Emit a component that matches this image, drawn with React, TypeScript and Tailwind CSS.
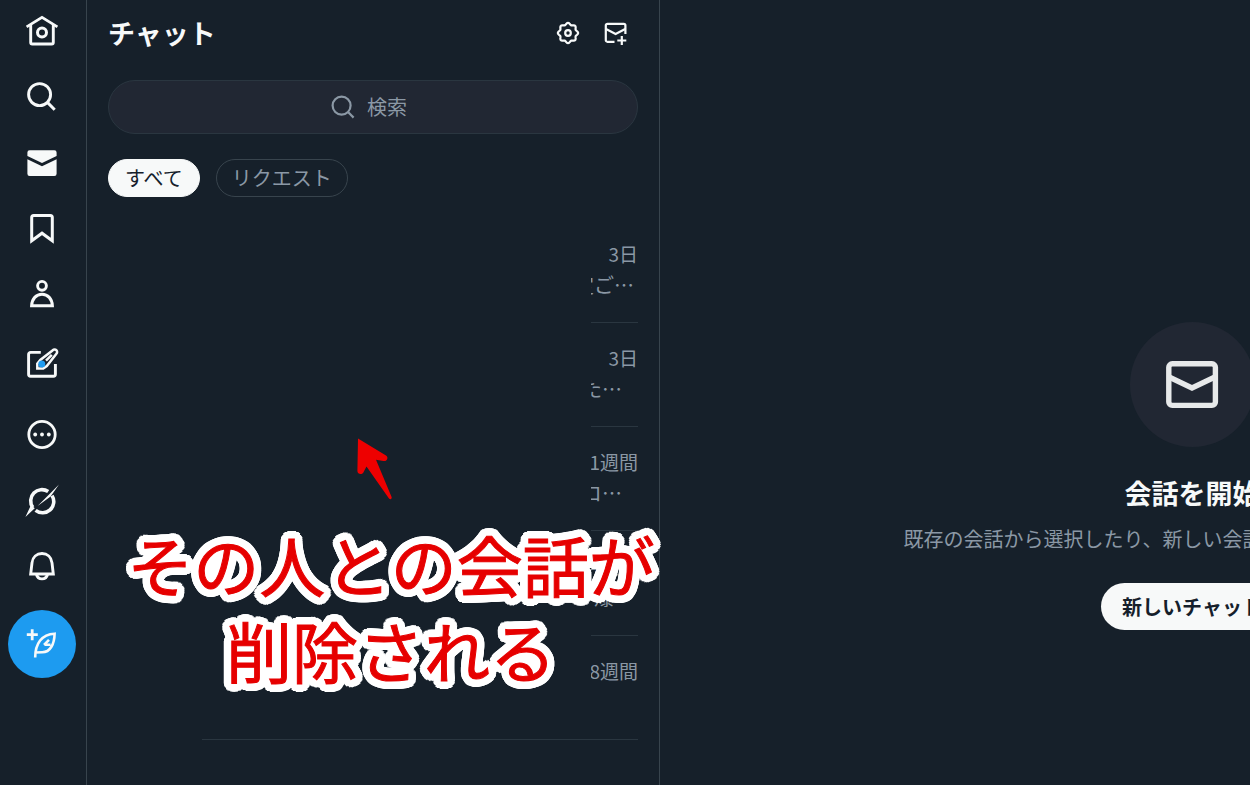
import type { ReactNode } from 'react'

type IconProps = { className?: string; children: ReactNode; viewBox?: string }

function Icon({ className = 'size-9', children, viewBox = '0 0 36 36' }: IconProps) {
  return (
    <svg viewBox={viewBox} fill="none" stroke="currentColor" aria-hidden="true" className={`shrink-0 ${className}`}>
      {children}
    </svg>
  )
}

// eight soft teeth around the hub
const gearPoints = Array.from({ length: 96 }, (_, i) => {
  const angle = (i / 96) * Math.PI * 2
  const radius = 9.2 + 0.9 * Math.cos(angle * 8)
  return `${(14 + radius * Math.cos(angle)).toFixed(2)},${(14 + radius * Math.sin(angle)).toFixed(2)}`
}).join(' ')

// ring of solid shadows that forms the round white outline of the caption
const captionOutline = [8, 4]
  .flatMap((radius) =>
    Array.from({ length: 32 }, (_, i) => {
      const angle = (i / 32) * Math.PI * 2
      return `${(radius * Math.cos(angle)).toFixed(2)}px ${(radius * Math.sin(angle)).toFixed(2)}px 0 #fff`
    }),
  )
  .join(', ')

const navItems = [
  {
    label: 'ホーム',
    className: 'h-16',
    icon: (
      <Icon>
        <path d="M2.6 12.9 18 3.4l15.4 9.5" strokeWidth="2.8" />
        <path d="M6.7 11v17.4a1.6 1.6 0 0 0 1.6 1.6h19.4a1.6 1.6 0 0 0 1.6-1.6V11" strokeWidth="2.9" />
        <circle cx="18" cy="18.4" r="4.5" strokeWidth="3" />
      </Icon>
    ),
  },
  {
    label: '検索',
    className: 'h-[66px]',
    icon: (
      <Icon>
        <circle cx="15.6" cy="15.6" r="11" strokeWidth="2.9" />
        <path d="m23.4 23.4 7.3 7.3" strokeWidth="3" />
      </Icon>
    ),
  },
  {
    label: 'チャット',
    className: 'h-[66px]',
    icon: (
      <Icon>
        <path
          d="M3.4 7.4a2.2 2.2 0 0 1 2.2-2.2h24.8a2.2 2.2 0 0 1 2.2 2.2v3.7L18 18 3.4 11.1zM3.4 14.2 18 21.2l14.6-7v14.6a2.2 2.2 0 0 1-2.2 2.2H5.6a2.2 2.2 0 0 1-2.2-2.2z"
          fill="currentColor"
          stroke="none"
        />
      </Icon>
    ),
  },
  {
    label: 'ブックマーク',
    className: 'h-[66px]',
    icon: (
      <Icon>
        <path d="M7.7 29.8V6.4a2 2 0 0 1 2-2h16.6a2 2 0 0 1 2 2v23.4L18 22.2z" strokeWidth="3" />
      </Icon>
    ),
  },
  {
    label: 'プロフィール',
    className: 'h-[66px]',
    icon: (
      <Icon>
        <circle cx="18" cy="8.8" r="4.4" strokeWidth="2.9" />
        <path d="M7.6 28.8c.3-7 4.6-11.6 10.4-11.6s10.1 4.600 10.4 11.6z" strokeWidth="3" />
      </Icon>
    ),
  },
  {
    label: '記事',
    className: 'h-[72px]',
    icon: (
      <Icon>
        <path d="M16.8 6.4H6.6a2 2 0 0 0-2 2v19.8a2 2 0 0 0 2 2h22.8a2 2 0 0 0 2-2V18" strokeWidth="2.9" />
        <path d="M13.3 22.6v-5l3-3.6L28.8 4.2a2.5 2.500 0 0 1 3.6 3.500l-9.600 12.300-3.600 2.600zM22 14.600l5.800-5.800" strokeWidth="2.5" />
        <circle cx="17.8" cy="18" r="3.5" fill="#1d9bf0" stroke="none" />
      </Icon>
    ),
  },
  {
    label: 'もっと見る',
    className: 'h-[68px]',
    icon: (
      <Icon>
        <circle cx="18" cy="18.5" r="13.2" strokeWidth="2.8" />
        <g fill="currentColor" stroke="none">
          <circle cx="11.2" cy="18.5" r="1.9" />
          <circle cx="18" cy="18.5" r="1.9" />
          <circle cx="24.8" cy="18.5" r="1.9" />
        </g>
      </Icon>
    ),
  },
  {
    label: 'Grok',
    className: 'h-[66px]',
    icon: (
      <Icon>
        <path d="M24.2 8.6A11.2 11.2 0 0 0 8.8 24.4" strokeWidth="3.6" />
        <path d="M11.6 27.4A11.2 11.2 0 0 0 28 12.6" strokeWidth="3.6" />
        <path d="M35 1.6 13.6 23l13-9.4zM7 22l3.8 3.2L1.4 34z" fill="currentColor" stroke="none" />
      </Icon>
    ),
  },
  {
    label: '通知',
    className: 'h-[66px]',
    icon: (
      <Icon>
        <path d="M6.7 25 8 13.8C8.6 8 12.8 4.5 18 4.5s9.4 3.5 10 9.3L29.3 25z" strokeWidth="2.9" />
        <path d="M12.6 25.6a5.5 5.3 0 0 0 10.8 0" strokeWidth="2.9" />
      </Icon>
    ),
  },
]

const conversations = [
  { snippet: '定ご…', time: '3日', shift: 'right-1', height: 'h-[104px]' },
  { snippet: '定た…', time: '3日', shift: 'right-4', height: 'h-[104px]' },
  { snippet: '定コ…', time: '1週間', shift: 'right-4', height: 'h-[104px]' },
  { snippet: '爆…', time: '4週間', shift: 'right-1', height: 'h-[105px]' },
  { snippet: '', time: '8週間', shift: 'right-1', height: 'h-[104px]' },
]

function SideNav() {
  return (
    <nav aria-label="メイン" className="flex w-[87px] shrink-0 flex-col border-r border-[#38444d] pr-0.5">
      {navItems.map((item) => (
        <a
          key={item.label}
          href="#"
          aria-label={item.label}
          className={`flex shrink-0 items-center justify-center ${item.className}`}
        >
          {item.icon}
        </a>
      ))}
      <button
        type="button"
        aria-label="ポストする"
        className="mt-2.5 flex size-[68px] shrink-0 items-center justify-center self-center rounded-full bg-[#1d9bf0]"
      >
        <Icon>
          <path d="M8.2 3.2v11M2.8 8.7h11" strokeWidth="2.8" />
          <path
            d="M11.2 31.5c0-14 6.6-23.4 19.4-23.8-.2 10-4.2 18.6-12.4 18.6-2.4 0-4.2 0-6.6.2M20.500 18.800h6M25 13.800l-5 5"
            strokeWidth="2.6"
          />
        </Icon>
      </button>
    </nav>
  )
}

function ChatList() {
  return (
    <section className="relative flex w-[573px] shrink-0 flex-col border-r border-[#38444d] px-[21px]">
      <header className="flex h-[66px] items-center justify-between">
        <h1 className="text-[27px] leading-9 font-bold">チャット</h1>
        <div className="flex gap-5 pr-2">
          <button type="button" aria-label="設定">
            <Icon className="size-7" viewBox="0 0 28 28">
              <polygon points={gearPoints} strokeWidth="2.2" strokeLinejoin="round" />
              <circle cx="14" cy="14" r="2.8" strokeWidth="2.2" />
            </Icon>
          </button>
          <button type="button" aria-label="新しいチャット">
            <Icon className="size-7" viewBox="0 0 28 28">
              <path d="M12.5 22.8H5.4a1.6 1.6 0 0 1-1.6-1.6V6.4a1.6 1.6 0 0 1 1.6-1.6h16.400a1.6 1.6 0 0 1 1.6 1.6V15" strokeWidth="2.2" />
              <path d="m4 10 9.600 4.900L23.200 10M19.800 17v9M15.300 21.500h9" strokeWidth="2.2" />
            </Icon>
          </button>
        </div>
      </header>

      <label className="mt-3.5 flex h-[54px] items-center justify-center gap-3 rounded-full border border-[#2a3640] bg-[#212733] pr-2 text-[#8b98a5]">
        <Icon className="size-6" viewBox="0 0 24 24">
          <circle cx="10.6" cy="10.6" r="9" strokeWidth="2.2" />
          <path d="m17 17 5.6 5.6" strokeWidth="2.2" />
        </Icon>
        <input
          type="text"
          aria-label="検索"
          placeholder="検索"
          className="w-10 bg-transparent text-xl outline-none placeholder:text-[#8b98a5]"
        />
      </label>

      <div className="mt-[25px] flex gap-4 text-xl">
        <button type="button" className="h-[38px] rounded-full border border-[#f7f9f9] bg-[#f7f9f9] px-4 leading-9 text-[#15202b]">
          すべて
        </button>
        <button type="button" className="h-[38px] rounded-full border border-[#38444d] px-[15px] leading-9 text-[#8b98a5]">
          リクエスト
        </button>
      </div>

      <ul className="mt-[22px] flex flex-col items-end text-xl text-[#8b98a5]">
        {conversations.map((item, i) => (
          <li
            key={i}
            className={`flex w-[47px] flex-col items-end overflow-hidden border-b border-[#2a3640] pt-[19px] leading-[31px] whitespace-nowrap last:w-[436px] ${item.height}`}
          >
            <span className="flex w-[47px] justify-end overflow-hidden text-[19px]">{item.time}</span>
            <span className={`relative ${item.shift}`}>{item.snippet}</span>
          </li>
        ))}
      </ul>

      <svg viewBox="0 0 40 66" aria-hidden="true" className="absolute top-[436px] left-[268px] h-[66px] w-10">
        <path
          d="M3 2.5 31 19.5c3 2 .8 6.4-2.6 5.4l-7.4-1.2L36.6 61c.6 2.2-1.6 3-2.8 1.2L11.5 30.5 8.6 36c-1 3-6.2 2.6-6.2-1z"
          fill="#ee0000"
        />
      </svg>
      <p
        className="absolute top-[520px] left-1/2 ml-[18px] -translate-x-1/2 text-center text-[66px] leading-[86px] whitespace-nowrap text-[#e60000] [-webkit-text-stroke:1px_#e60000]"
        style={{ textShadow: captionOutline }}
      >
        その人との会話が
        <br />
        削除される
      </p>
    </section>
  )
}

function EmptyConversation() {
  return (
    <main className="min-w-0 flex-1 overflow-hidden">
      <div className="flex min-w-[1064px] flex-col items-center pt-[322px]">
        <div className="flex size-[125px] items-center justify-center rounded-full bg-[#212733] text-[#e7e9ea]">
          <Icon className="size-16" viewBox="0 0 64 64">
            <rect x="8.8" y="10.8" width="46.6" height="41.6" rx="3.5" strokeWidth="5.4" />
            <path d="m8 23.5 24 11.5 24-11.5" strokeWidth="5.4" />
          </Icon>
        </div>
        <h2 className="mt-[26px] text-[27px] leading-10 font-bold">会話を開始</h2>
        <p className="mt-2.5 text-xl leading-8 text-[#8b98a5]">既存の会話から選択したり、新しい会話を開始したりできます。</p>
        <button type="button" className="mt-7 h-[47px] rounded-full bg-[#f7f9f9] px-[21px] text-xl font-bold text-[#15202b]">
          新しいチャット
        </button>
      </div>
    </main>
  )
}

export default function App() {
  return (
    <div
      lang="ja"
      className="flex min-h-screen overflow-hidden bg-[#16202a] font-['Noto_Sans_CJK_JP',sans-serif] text-[#f7f9f9]"
    >
      <SideNav />
      <ChatList />
      <EmptyConversation />
    </div>
  )
}
